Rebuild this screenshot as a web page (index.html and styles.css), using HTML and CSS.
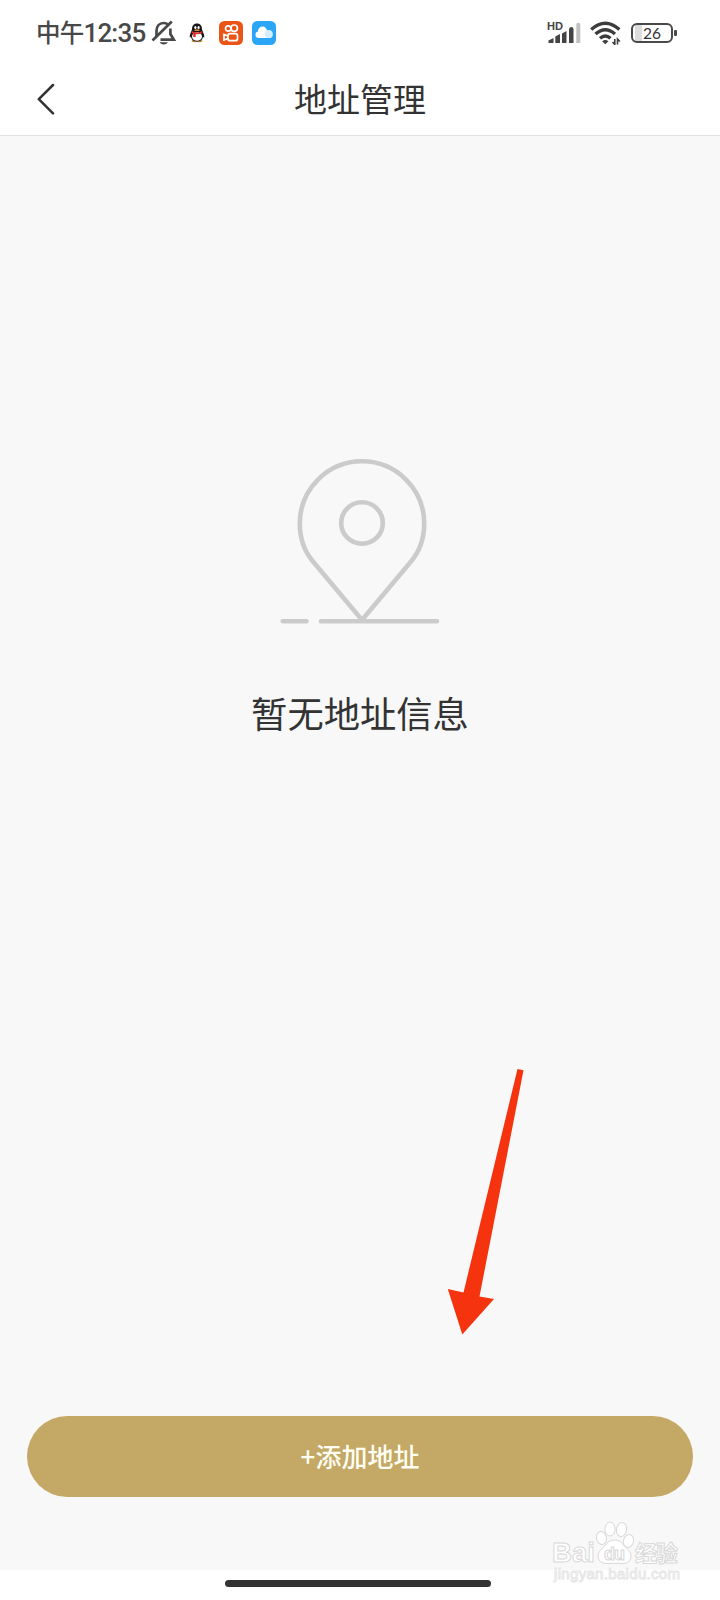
FILE: index.html
```html
<!DOCTYPE html>
<html lang="zh-CN">
<head>
  <meta charset="UTF-8" />
  <meta name="viewport" content="width=device-width, initial-scale=1.0"/>
  <title>地址管理</title>
  <link rel="stylesheet" href="styles.css">
</head>
<body>
  <div class="page">
    <div class="status-bar">
      <div class="status-left">
        <span class="time"><span class="noon">中午</span>12:35</span>
        <svg class="bell" width="26" height="26" viewBox="0 0 26 26" fill="none" stroke="#484848" stroke-width="2.7">
          <path d="M5.500 16V11C5.500 6 8.500 3 12.500 3C14.500 3 16 3.600 17.200 4.800M19.400 8.500V14L22.800 19.600H9.500"/>
          <path d="M1.500 20.500L20.800 1.500"/>
          <path d="M8.500 22.300H17Q15.500 24.600 12.700 24.600T8.500 22.300Z" fill="#484848" stroke="none"/>
        </svg>
        <svg class="qq" width="16" height="20" viewBox="0 0 16 20">
          <ellipse cx="5.500" cy="18" rx="3" ry="1.200" fill="#c99245"/>
          <ellipse cx="10.500" cy="18" rx="3" ry="1.200" fill="#c99245"/>
          <path d="M8 .5C4.500 .5 3 3 3 6.500C2.500 8.500 .5 11 .7 14.500L2 14C3 17.500 5 18.500 8 18.500S13 17.500 14 14L15.300 14.500C15.500 11 13.500 8.500 13 6.500C13 3 11.500 .5 8 .5Z" fill="#171717"/>
          <ellipse cx="8" cy="13.500" rx="5" ry="4.300" fill="#fff"/>
          <ellipse cx="6.400" cy="4.600" rx="1.100" ry="1.500" fill="#fff"/>
          <ellipse cx="9.600" cy="4.600" rx="1.100" ry="1.500" fill="#fff"/>
          <ellipse cx="8" cy="7.200" rx="2.800" ry=".9" fill="#d8863a"/>
          <path d="M2.800 8Q8 11 13.200 8L13.500 10Q10 11.600 6.700 11.300V14H4.300V10.700L2.500 10Z" fill="#dc2e2b"/>
        </svg>
        <svg class="kuaishou" width="24" height="24" viewBox="0 0 24 24" fill="none" stroke="#fff" stroke-width="1.700">
          <rect width="24" height="24" rx="5.500" fill="#ea5417" stroke="none"/>
          <circle cx="9.200" cy="7.500" r="2.700"/>
          <circle cx="15.200" cy="7.200" r="3.200"/>
          <rect x="9" y="12.700" width="9.500" height="7" rx="2"/>
          <path d="M9 15L5 13.500V19L9 17.500"/>
        </svg>
        <svg width="24" height="24" viewBox="0 0 24 24">
          <rect width="24" height="24" rx="5.500" fill="#2ba5f5"/>
          <circle cx="10.500" cy="10.200" r="4.600" fill="#fff"/>
          <rect x="3.500" y="10.500" width="17" height="6.500" rx="3.250" fill="#fff"/>
          <circle cx="16.700" cy="13" r="4" fill="#d5eefe"/>
        </svg>
      </div>
      <div class="status-right">
        <svg width="36" height="24" viewBox="0 0 36 24" fill="#444">
          <text class="hd" x="0" y="9" textLength="16" lengthAdjust="spacingAndGlyphs">HD</text>
          <path d="M1.500 22V19.500L6.500 17V22ZM8.300 22V15.500L13 13V22ZM15 22V12.500L19.500 10V22ZM22 22V8.500Q22 6 24.200 6T26.500 8V22Z"/>
          <path d="M29.300 22V4Q29.300 1.800 31.300 1.800T33.300 4V22Z" fill="#c1c1c1"/>
        </svg>
        <svg class="wifi" width="32" height="24" viewBox="0 0 32 24" fill="none" stroke="#3c3c3c" stroke-width="3.3">
          <path d="M1.200 8.500Q15.300 -4 29.400 8.500"/>
          <path d="M5.500 13Q15.300 4.500 25 13"/>
          <path d="M10 17.300Q15.300 12.500 20.500 17.300"/>
          <path d="M12.200 20.200Q15.300 17.600 18.400 20.200L15.300 23.300Z" fill="#3c3c3c" stroke="none"/>
          <path d="M24.800 18V23.500L22.500 21M27.500 23.500V18L29.800 20.500" stroke-width="1.600"/>
        </svg>
        <div class="battery"><span>26</span></div>
      </div>
    </div>

    <div class="header">
      <svg class="back" width="20" height="34" viewBox="0 0 20 34" fill="none" stroke="#333" stroke-width="2.500" stroke-linecap="round" stroke-linejoin="round">
        <path d="M18 4L3.800 18.200L18 32.400"/>
      </svg>
      <h1>地址管理</h1>
    </div>

    <div class="content">
      <div class="empty">
        <svg width="160" height="170" viewBox="20 16 160 170" fill="none" stroke="#cbcbcb" stroke-width="4.600" stroke-linecap="round" stroke-linejoin="round">
          <path d="M102 180L53 121.500C45 112 39.800 98 39.800 83.500A62.200 62.200 0 0 1 164.200 83.500C164.200 98 159 112 151 121.500Z"/>
          <circle cx="102" cy="83" r="20.800"/>
          <path d="M22.700 181.200H46.500M61 181.200H177"/>
        </svg>
        <p>暂无地址信息</p>
      </div>
      <button class="add-btn" type="button">+添加地址</button>
    </div>

    <div class="home-bar"><span></span></div>

    <svg class="pointer" width="80" height="270" viewBox="0 0 80 270">
      <path d="M70.500 1L76.500 2.300L32.500 228.500L47 231L15.300 266.500L.8 221L16.500 224.500Z" fill="#f5330f"/>
    </svg>

    <svg class="watermark" width="136" height="70" viewBox="0 0 136 70" fill="#fff" stroke="#d8d8d8" stroke-width="1">
      <text class="wm-brand" x="1" y="42" textLength="43" lengthAdjust="spacingAndGlyphs">Bai</text>
      <ellipse cx="50.500" cy="18" rx="5" ry="6.500" transform="rotate(-15 50.500 18)"/>
      <ellipse cx="59" cy="9" rx="5" ry="7"/>
      <ellipse cx="70.500" cy="9.500" rx="5" ry="7" transform="rotate(10 70.500 9.500)"/>
      <ellipse cx="77.500" cy="21" rx="5" ry="6.500" transform="rotate(15 77.500 21)"/>
      <path d="M63.500 20C56 20 55 26 50 29.500C45 34 46 43 55 43.500C60 43.500 67 43 72 43.500C81 43.500 82 34 77 29.500C72 26 71 20 63.500 20Z"/>
      <text class="wm-du" x="53" y="40" textLength="21">du</text>
      <text class="wm-cn" x="84" y="41" textLength="43">经验</text>
      <text class="wm-url" x="3" y="59" textLength="126">jingyan.baidu.com</text>
    </svg>
  </div>
</body>
</html>
```

FILE: styles.css
```css
body {
  margin: 0;
  font-family: "Liberation Sans", "Noto Sans CJK SC", sans-serif;
  background: #fff;
  color: #333;
}
.page {
  position: relative;
  display: flex;
  flex-direction: column;
  width: 720px;
  height: 1600px;
  overflow: hidden;
}
.status-bar {
  display: flex;
  justify-content: space-between;
  align-items: center;
  height: 65px;
  padding: 0 42px 0 36px;
  box-sizing: border-box;
}
.status-left, .status-right {
  display: flex;
  align-items: center;
}
.time {
  width: 115px;
  padding-top: 2px;
  font-family: Roboto, "Noto Sans CJK SC", sans-serif;
  font-size: 26px;
  font-weight: 500;
  line-height: 30px;
  letter-spacing: -0.8px;
  color: #484848;
  white-space: nowrap;
}
.noon {
  font-size: 24.5px;
}
.qq {
  margin: 0 14px 0 12px;
}
.kuaishou {
  margin-right: 9px;
}
.hd {
  font-family: "Liberation Sans", sans-serif;
  font-size: 11px;
  font-weight: bold;
}
.wifi {
  margin: 0 9px 0 7px;
}
.battery {
  position: relative;
  display: flex;
  align-items: center;
  justify-content: center;
  width: 42px;
  height: 20px;
  margin-right: 5px;
  box-sizing: border-box;
  border: 2px solid #494949;
  border-radius: 6px;
  background: linear-gradient(to right, #fff 2px, #ddd 2px, #ddd 9px, #fff 9px);
  font-family: Lato, sans-serif;
  font-size: 15.5px;
  color: #333;
}
.battery::after {
  content: "";
  position: absolute;
  right: -6px;
  top: 5px;
  width: 3px;
  height: 6px;
  border-radius: 1px;
  background: #494949;
}
.header {
  display: grid;
  grid-template-columns: 1fr auto 1fr;
  align-items: center;
  height: 71px;
  padding: 0 35px 4px;
  box-sizing: border-box;
  border-bottom: 1px solid #e1e1e1;
}
.header h1 {
  margin: 0;
  font-family: "Noto Sans CJK SC", sans-serif;
  font-size: 33px;
  font-weight: 400;
  line-height: 40px;
}
.content {
  display: flex;
  flex: 1;
  flex-direction: column;
  justify-content: space-between;
  padding: 320px 27px 73px;
  background: #f8f8f8;
}
.empty {
  display: flex;
  flex-direction: column;
  align-items: center;
}
.empty p {
  margin: 61px 0 0;
  font-family: "Noto Sans CJK SC", sans-serif;
  font-size: 36.3px;
  line-height: 50px;
}
.add-btn {
  height: 81px;
  padding: 0 0 2px;
  border: none;
  border-radius: 41px;
  background: #c4a865;
  color: #fffef2;
  font-family: "Noto Sans CJK SC", sans-serif;
  font-size: 26px;
  font-weight: 500;
}
.home-bar {
  display: flex;
  justify-content: center;
  height: 30px;
  padding-top: 10px;
  box-sizing: border-box;
  background: #fff;
}
.home-bar span {
  width: 266px;
  height: 7px;
  margin-right: 4px;
  border-radius: 4px;
  background: #333;
}
.pointer {
  position: absolute;
  left: 447px;
  top: 1068px;
}
.watermark {
  position: absolute;
  left: 551px;
  top: 1520px;
  font-family: "Liberation Sans", "Noto Sans CJK SC", sans-serif;
  font-weight: bold;
}
.wm-brand {
  font-size: 28px;
}
.wm-du {
  font-size: 18px;
}
.wm-cn {
  font-family: "Noto Sans CJK SC", sans-serif;
  font-size: 22px;
}
.wm-url {
  font-size: 15px;
  font-weight: normal;
  stroke: #e6e6e6;
}
```
